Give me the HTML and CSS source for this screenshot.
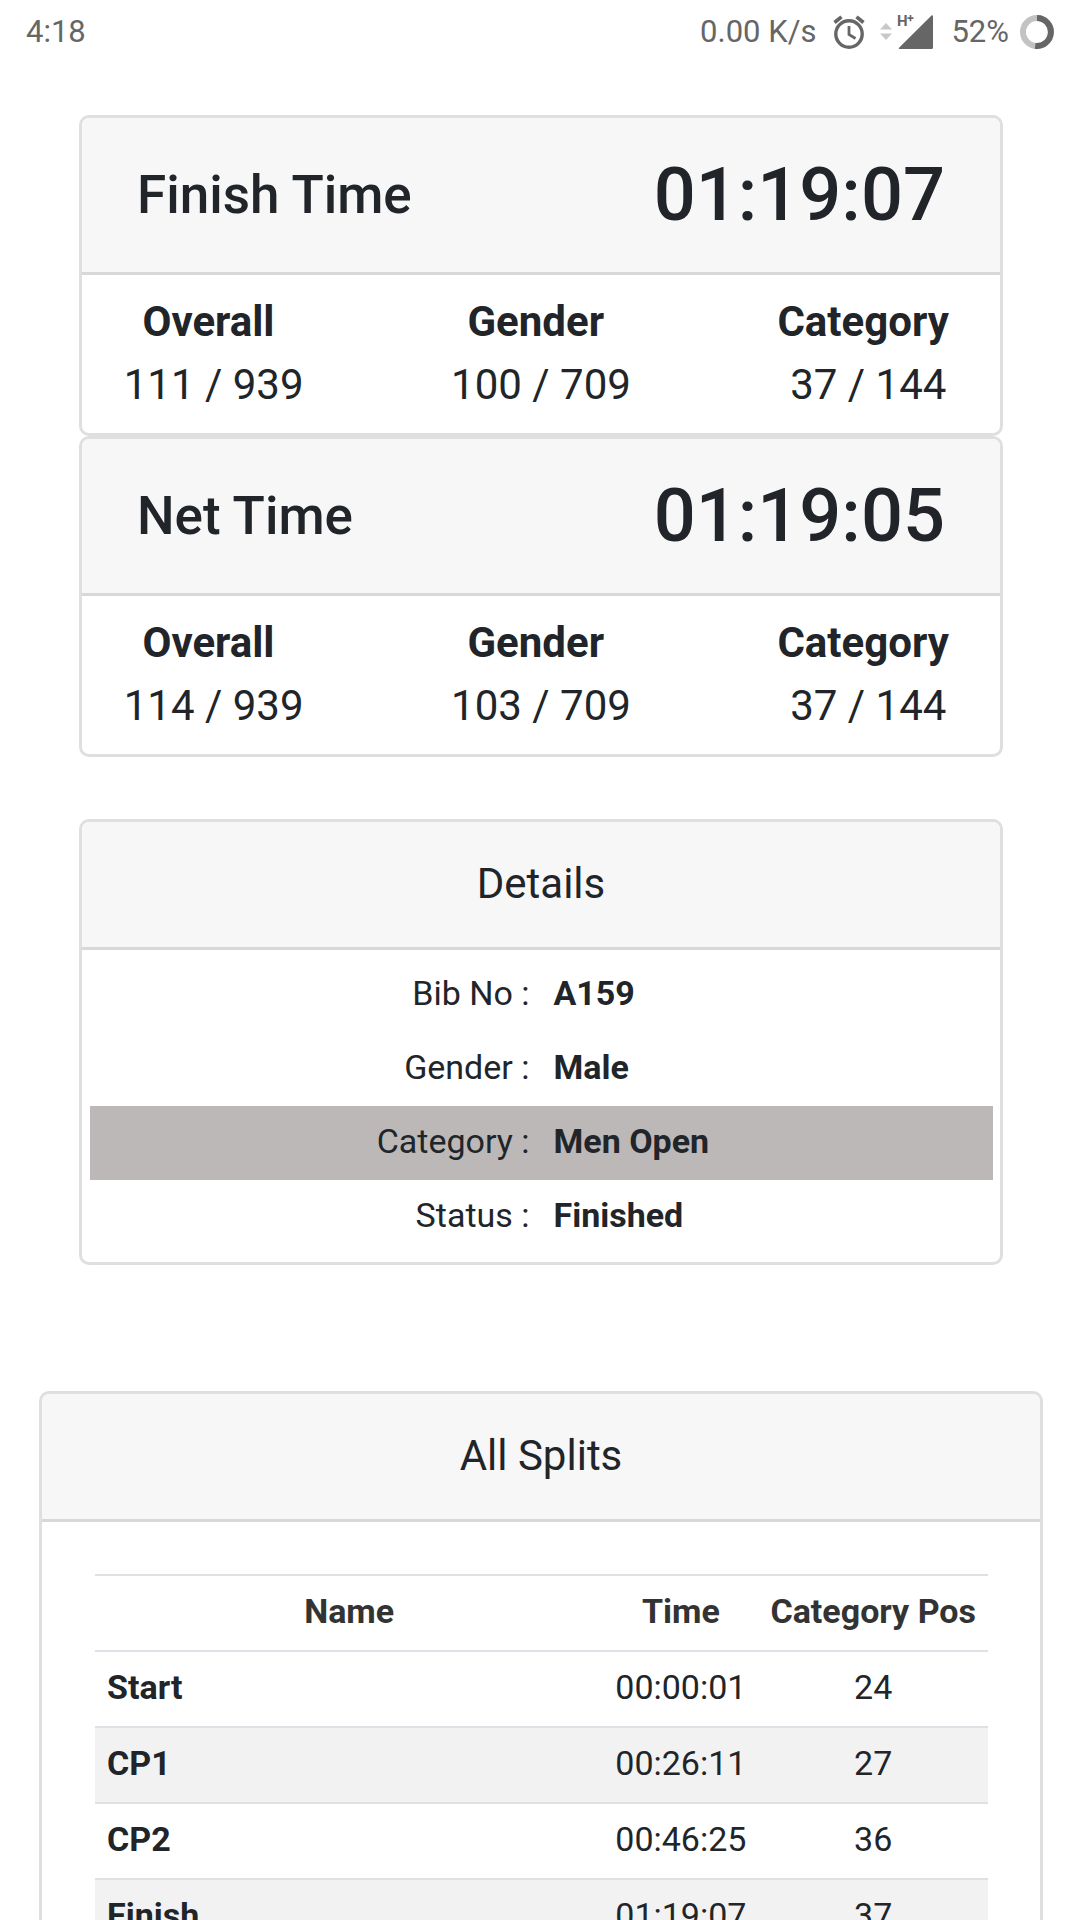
FILE: index.html
```html
<!DOCTYPE html>
<html lang="en">
<head>
<meta charset="utf-8">
<meta name="viewport" content="width=device-width, initial-scale=1">
<title>Race Results</title>
<link rel="stylesheet" href="styles.css">
</head>
<body>
<header class="status">
  <span class="status-clock">4:18</span>
  <div class="status-icons">
    <span>0.00 K/s</span>
    <svg class="icon-alarm" width="32" height="34" viewBox="0 0 32 34" fill="none" stroke="#666" role="img" aria-label="Alarm">
      <circle cx="16" cy="19" r="13.2" stroke-width="3.400"/>
      <path d="M16 11v8.500l6.500 4" stroke-width="2.800"/>
      <path d="M1.500 7.500L8.500 1.800M30.500 7.500L23.500 1.800" stroke-width="3.600"/>
    </svg>
    <svg class="icon-data" width="12" height="34" viewBox="0 0 12 34" fill="#c8c8c8" aria-hidden="true">
      <path d="M0 14.500L6 8l6 6.500zM0 18.500h12L6 25z"/>
    </svg>
    <svg class="icon-signal" width="36" height="34" viewBox="0 0 36 34" fill="#666" role="img" aria-label="Signal">
      <path d="M33.500 0.400Q35 -0.300 35 1.500V32.500Q35 34 33.500 34H2Q0 34 1.300 32.500z"/>
      <text class="signal-type" x="-1" y="11">H</text>
      <path d="M9.500 2.300h2.200V0h1.600v2.300h2.200v1.600h-2.200v2.300h-1.600V3.900H9.500z"/>
    </svg>
    <span class="status-battery">52%</span>
    <svg width="34" height="34" viewBox="0 0 34 34" fill="none" stroke-width="6" role="img" aria-label="Battery">
      <circle cx="17" cy="17" r="14" stroke="#c3c3c3"/>
      <path d="M17 3a14 14 0 1 1-1.800 27.900" stroke="#666"/>
    </svg>
  </div>
</header>

<main class="page">
  <div class="summary">
    <section class="card">
      <div class="card-header time-header">
        <h2 class="time-label">Finish Time</h2>
        <p class="time-value">01:19:07</p>
      </div>
      <dl class="ranks">
        <div class="rank"><dt>Overall&nbsp;</dt><dd>111 / 939</dd></div>
        <div class="rank"><dt>Gender&nbsp;</dt><dd>100 / 709</dd></div>
        <div class="rank"><dt>Category&nbsp;</dt><dd>37 / 144</dd></div>
      </dl>
    </section>
    <section class="card">
      <div class="card-header time-header">
        <h2 class="time-label">Net Time</h2>
        <p class="time-value">01:19:05</p>
      </div>
      <dl class="ranks">
        <div class="rank"><dt>Overall&nbsp;</dt><dd>114 / 939</dd></div>
        <div class="rank"><dt>Gender&nbsp;</dt><dd>103 / 709</dd></div>
        <div class="rank"><dt>Category&nbsp;</dt><dd>37 / 144</dd></div>
      </dl>
    </section>
  </div>

  <section class="card details">
    <h2 class="card-header card-title">Details</h2>
    <dl class="detail-list">
      <div class="detail"><dt>Bib No :</dt><dd>A159</dd></div>
      <div class="detail"><dt>Gender :</dt><dd>Male</dd></div>
      <div class="detail detail-marked"><dt>Category :</dt><dd>Men Open</dd></div>
      <div class="detail"><dt>Status :</dt><dd>Finished</dd></div>
    </dl>
  </section>

  <section class="card splits">
    <h2 class="card-header card-title">All Splits</h2>
    <div class="splits-body">
      <table class="splits-table">
        <thead>
          <tr><th class="col-name" scope="col">Name</th><th scope="col">Time</th><th scope="col">Category Pos</th></tr>
        </thead>
        <tbody>
          <tr><th scope="row">Start</th><td>00:00:01</td><td>24</td></tr>
          <tr><th scope="row">CP1</th><td>00:26:11</td><td>27</td></tr>
          <tr><th scope="row">CP2</th><td>00:46:25</td><td>36</td></tr>
          <tr><th scope="row">Finish</th><td>01:19:07</td><td>37</td></tr>
        </tbody>
      </table>
    </div>
  </section>
</main>
</body>
</html>
```

FILE: styles.css
```css
* {
  box-sizing: border-box;
}

body {
  margin: 0;
  background: #fff;
  color: #212529;
  font-family: Roboto, "Liberation Sans", sans-serif;
  font-size: 34px;
  line-height: 50px;
}

h2,
p,
dl,
dd {
  margin: 0;
}

/* Status bar */
.status {
  display: flex;
  justify-content: space-between;
  align-items: center;
  height: 63px;
  padding: 0 26px;
  color: #666;
  font-size: 31px;
  line-height: 36px;
}

.status-icons {
  display: flex;
  align-items: center;
}

.icon-alarm {
  margin-left: 17px;
}

.icon-data {
  margin-left: 15px;
}

.icon-signal {
  margin-left: 6px;
  overflow: visible;
}

.signal-type {
  font-size: 15px;
  font-weight: 700;
}

.status-battery {
  margin: 0 11px 0 17px;
}

/* Cards */
.page {
  padding: 52px 37px 52px 39px;
}

.summary,
.details {
  margin: 0 40px 62px;
}

.details {
  margin-bottom: 126px;
}

.card {
  overflow: hidden;
  border: 3px solid #dfdfdf;
  border-radius: 10px;
  background: #fff;
}

.card-header {
  border-bottom: 3px solid #d8d8d8;
  background: #f7f7f7;
}

.card-title {
  padding: 30px 31px 32px;
  font-size: 42px;
  font-weight: 400;
  line-height: 63px;
  text-align: center;
}

/* Finish and net time */
.time-header {
  display: flex;
  justify-content: space-between;
  align-items: center;
  padding: 33px 55px;
  font-weight: 500;
}

.time-label {
  font-size: 53px;
  font-weight: 500;
  line-height: 63px;
}

.time-value {
  font-size: 74px;
  line-height: 88px;
}

.ranks {
  display: grid;
  grid-template-columns: repeat(3, 1fr);
  margin: 0 -32px;
  padding: 15px 0 17px;
  font-size: 42px;
  line-height: 63px;
  text-align: center;
}

.rank dt {
  font-weight: 700;
}

/* Runner details */
.detail-list {
  padding: 8px 7px 8px 8px;
}

.detail {
  display: grid;
  grid-template-columns: 1fr 1fr;
  gap: 24px;
  padding: 10px 0 14px;
}

.detail dt {
  text-align: right;
}

.detail dd {
  font-weight: 700;
}

.detail-marked {
  background: #bcb8b7;
}

/* Splits */
.splits-body {
  padding: 52px 52px 52px 53px;
}

.splits-table {
  width: 100%;
  border-spacing: 0;
  text-align: center;
  white-space: nowrap;
}

.splits-table th,
.splits-table td {
  padding: 10px 12px 14px;
  border-top: 2px solid #dee2e6;
}

.splits-table thead th {
  color: #333;
}

.splits-table .col-name {
  width: 100%;
}

.splits-table tbody th {
  text-align: left;
}

.splits-table tbody tr:nth-child(even) {
  background: #f2f2f2;
}
```
